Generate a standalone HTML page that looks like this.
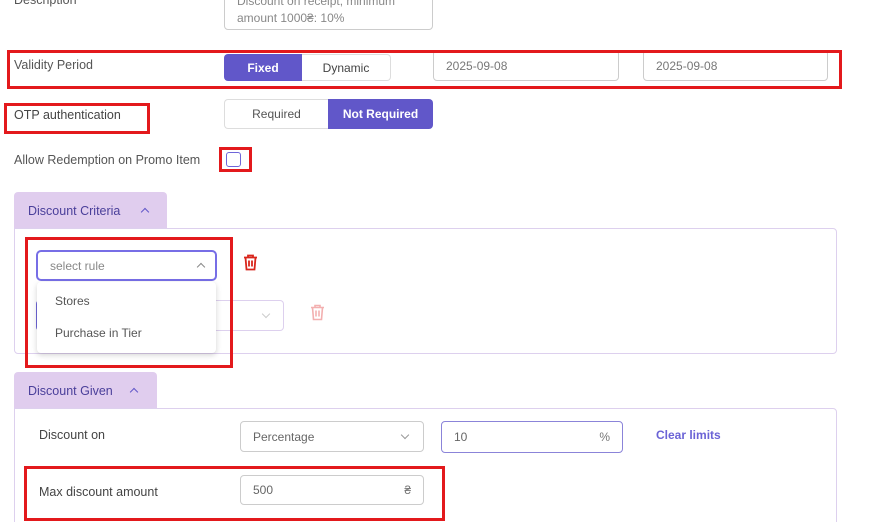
<!DOCTYPE html>
<html style="width:872px;height:522px;overflow:hidden"><head><meta charset="utf-8"><style>
*{box-sizing:border-box;margin:0;padding:0}
body{width:872px;height:522px;overflow:hidden;background:#fff;font-family:"Liberation Sans",sans-serif;color:#555;font-size:12px;position:relative}
.a{position:absolute}
.red{position:absolute;border:3px solid #e3191c}
.inp{position:absolute;border:1px solid #ccc;border-radius:4px;background:#fff;color:#777;font-size:12px;padding-left:12px;display:flex;align-items:center}
.lbl{position:absolute;font-size:12.5px;color:#555}
.tab{position:absolute;background:#e0cdee;border-radius:4px 4px 0 0;color:#4a3f9a;font-size:12.5px;padding-left:14px;display:flex;align-items:center}
.panel{position:absolute;border:1px solid #ddd0ee;border-radius:0 4px 4px 4px;background:#fff}
.chev{position:absolute;width:6px;height:6px;border-left:1.3px solid #888;border-top:1.3px solid #888}
</style></head><body>
<div class="inp" style="left:224px;top:-14px;width:209px;height:44px;align-items:flex-start;padding-top:6px;line-height:17px;color:#888">Discount on receipt, minimum<br>amount 1000₴: 10%</div>
<div class="lbl" style="left:14px;top:-7px">Description</div>

<div class="lbl" style="left:14px;top:58px">Validity Period</div>
<div class="a" style="left:224px;top:54px;width:78px;height:27px;background:#6157c9;border-radius:4px 0 0 4px;color:#fff;font-weight:bold;display:flex;align-items:center;justify-content:center">Fixed</div>
<div class="a" style="left:302px;top:54px;width:89px;height:27px;border:1px solid #ddd;border-left:none;border-radius:0 4px 4px 0;color:#444;display:flex;align-items:center;justify-content:center">Dynamic</div>
<div class="inp" style="left:433px;top:50px;width:186px;height:31px;padding-top:0">2025-09-08</div>
<div class="inp" style="left:643px;top:50px;width:185px;height:31px;padding-top:0">2025-09-08</div>
<div class="red" style="left:7px;top:50px;width:835px;height:39px"></div>

<div class="lbl" style="left:14px;top:108px;color:#444">OTP authentication</div>
<div class="red" style="left:4px;top:103px;width:146px;height:31px"></div>
<div class="a" style="left:224px;top:99px;width:104px;height:30px;border:1px solid #ddd;border-right:none;border-radius:4px 0 0 4px;color:#555;display:flex;align-items:center;justify-content:center">Required</div>
<div class="a" style="left:328px;top:99px;width:105px;height:30px;background:#6157c9;border-radius:0 4px 4px 0;color:#fff;font-weight:bold;display:flex;align-items:center;justify-content:center">Not Required</div>

<div class="lbl" style="left:14px;top:153px">Allow Redemption on Promo Item</div>
<div class="a" style="left:226px;top:152px;width:15px;height:15px;border:1.5px solid #6f66d9;border-radius:3px"></div>
<div class="red" style="left:219px;top:147px;width:33px;height:25px"></div>

<div class="tab" style="left:14px;top:192px;width:153px;height:37px">Discount Criteria</div>
<div class="chev" style="left:142px;top:209px;transform:rotate(45deg);border-color:#6157c9"></div>
<div class="panel" style="left:14px;top:228px;width:823px;height:126px"></div>
<div class="inp" style="left:36px;top:300px;width:248px;height:31px;border-color:#ddd0ee;border-left:2px solid #6f66d9"></div>
<div class="chev" style="left:263px;top:311px;transform:rotate(225deg);border-color:#ccc"></div>
<svg class="a" style="left:310px;top:304px" width="15" height="17" viewBox="0 0 15 17" fill="none" stroke="#f3b0b0" stroke-width="1.6"><path d="M1 3.5h13M5 3.5V1.5h5v2M2.5 3.5l1 12h8l1-12M6 6.5v6M9 6.5v6"/></svg>
<div class="inp" style="left:36px;top:250px;width:181px;height:31px;border:2px solid #776ee6;border-radius:5px;color:#888">select rule</div>
<div class="chev" style="left:198px;top:264px;transform:rotate(45deg)"></div>
<svg class="a" style="left:243px;top:254px" width="15" height="17" viewBox="0 0 15 17" fill="none" stroke="#d9261c" stroke-width="1.8"><path d="M1 3.5h13M5 3.5V1.5h5v2M2.5 3.5l1 12h8l1-12M6 6.5v6M9 6.5v6"/></svg>
<div class="a" style="left:37px;top:282px;width:179px;height:71px;background:#fff;border-radius:4px;box-shadow:0 2px 6px rgba(0,0,0,.18)">
<div class="a" style="left:18px;top:12px;color:#555">Stores</div>
<div class="a" style="left:18px;top:44px;color:#555">Purchase in Tier</div></div>
<div class="red" style="left:25px;top:237px;width:208px;height:131px"></div>

<div class="tab" style="left:14px;top:372px;width:143px;height:37px">Discount Given</div>
<div class="chev" style="left:131px;top:389px;transform:rotate(45deg);border-color:#6157c9"></div>
<div class="panel" style="left:14px;top:408px;width:823px;height:130px"></div>
<div class="lbl" style="left:39px;top:428px;color:#444">Discount on</div>
<div class="inp" style="left:240px;top:421px;width:184px;height:31px;color:#666">Percentage</div>
<div class="chev" style="left:402px;top:432px;transform:rotate(225deg);border-color:#999"></div>
<div class="inp" style="left:441px;top:421px;width:182px;height:32px;border:1.5px solid #8b84d9;color:#666">10<span style="position:absolute;right:12px;color:#777">%</span></div>
<div class="a" style="left:656px;top:428px;color:#6b63d6;font-weight:bold;font-size:12px">Clear limits</div>
<div class="lbl" style="left:39px;top:485px;color:#444">Max discount amount</div>
<div class="inp" style="left:240px;top:475px;width:184px;height:30px;color:#666">500<span style="position:absolute;right:12px;color:#777">₴</span></div>
<div class="red" style="left:24px;top:466px;width:421px;height:55px"></div>
</body></html>
